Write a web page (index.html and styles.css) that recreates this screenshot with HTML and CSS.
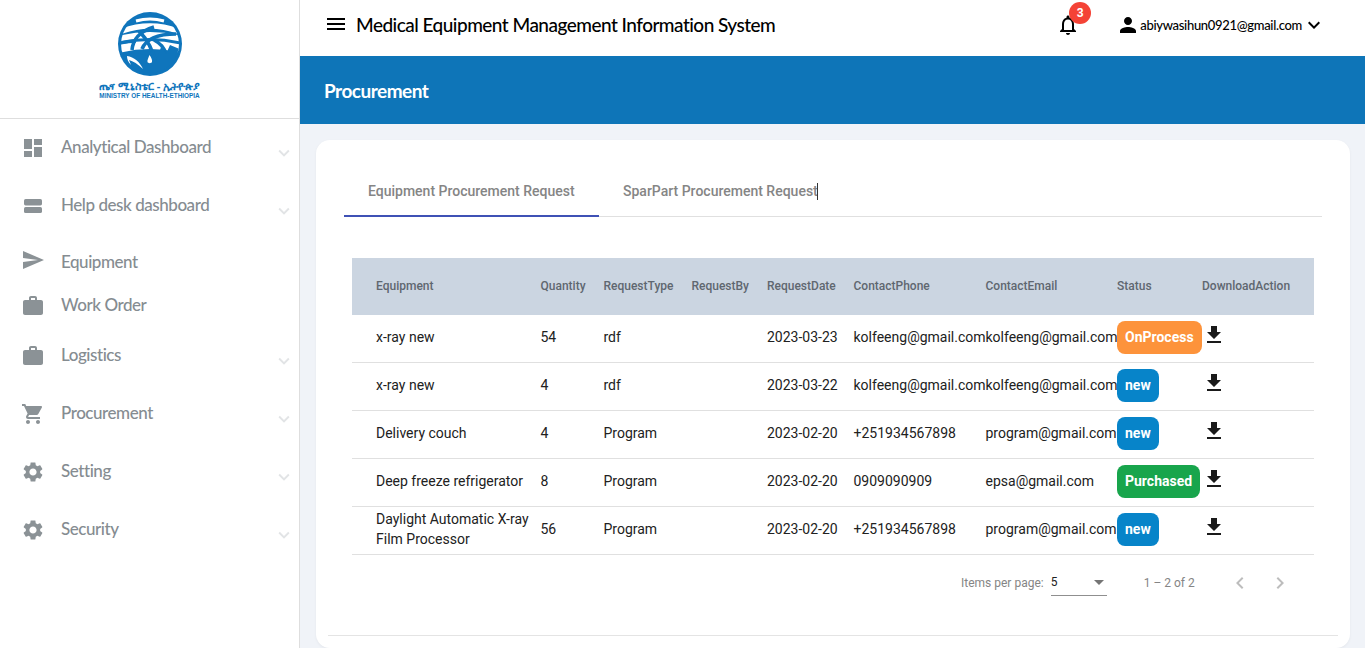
FILE: index.html
```html
<!DOCTYPE html>
<html lang="en">
<head>
    <meta charset="UTF-8">
    <meta name="viewport" content="width=device-width, initial-scale=1.0">
    <title>Procurement</title>
    <link rel="stylesheet" href="styles.css">
</head>
<body>
    <svg class="sprite" xmlns="http://www.w3.org/2000/svg">
        <symbol id="i-dashboard" viewBox="0 0 24 24"><path d="M3 13h8V3H3v10zm0 8h8v-6H3v6zm10 0h8V11h-8v10zm0-18v6h8V3h-8z"/></symbol>
        <symbol id="i-agenda" viewBox="0 0 24 24"><rect x="3" y="5" width="18" height="6.4" rx="1.6"/><rect x="3" y="13" width="18" height="6" rx="1.6"/></symbol>
        <symbol id="i-send" viewBox="0 0 24 24"><path d="M2.01 21L23 12 2.01 3 2 10l15 2-15 2z"/></symbol>
        <symbol id="i-work" viewBox="0 0 24 24"><path d="M20 6h-4V4c0-1.11-.89-2-2-2h-4c-1.11 0-2 .89-2 2v2H4c-1.11 0-1.99.89-1.99 2L2 19c0 1.11.89 2 2 2h16c1.11 0 2-.89 2-2V8c0-1.11-.89-2-2-2zm-6 0h-4V4h4v2z"/></symbol>
        <symbol id="i-cart" viewBox="0 0 24 24"><path d="M7 18c-1.1 0-1.99.9-1.99 2S5.9 22 7 22s2-.9 2-2-.9-2-2-2zM1 2v2h2l3.6 7.59-1.35 2.45c-.16.28-.25.61-.25.96 0 1.1.9 2 2 2h12v-2H7.42c-.14 0-.25-.11-.25-.25l.03-.12.9-1.63h7.45c.75 0 1.41-.41 1.75-1.03l3.58-6.49c.08-.14.12-.31.12-.48 0-.55-.45-1-1-1H5.21l-.94-2H1zm16 16c-1.1 0-1.99.9-1.99 2s.89 2 1.99 2 2-.9 2-2-.9-2-2-2z"/></symbol>
        <symbol id="i-gear" viewBox="0 0 24 24"><path d="M19.14 12.94c.04-.3.06-.61.06-.94 0-.32-.02-.64-.07-.94l2.03-1.58c.18-.14.23-.41.12-.61l-1.92-3.32c-.12-.22-.37-.29-.59-.22l-2.39.96c-.5-.38-1.03-.7-1.62-.94l-.36-2.54c-.04-.24-.24-.41-.48-.41h-3.84c-.24 0-.43.17-.47.41l-.36 2.54c-.59.24-1.13.57-1.62.94l-2.39-.96c-.22-.08-.47 0-.59.22L2.74 8.87c-.12.21-.08.47.12.61l2.03 1.58c-.05.3-.09.63-.09.94s.02.64.07.94l-2.03 1.58c-.18.14-.23.41-.12.61l1.92 3.32c.12.22.37.29.59.22l2.39-.96c.5.38 1.03.7 1.62.94l.36 2.54c.05.24.24.41.48.41h3.84c.24 0 .44-.17.47-.41l.36-2.54c.59-.24 1.13-.56 1.62-.94l2.39.96c.22.08.47 0 .59-.22l1.92-3.32c.12-.22.07-.47-.12-.61l-2.01-1.58zM12 15.6c-1.98 0-3.6-1.62-3.6-3.6s1.62-3.6 3.6-3.6 3.6 1.62 3.6 3.6-1.62 3.6-3.6 3.6z"/></symbol>
        <symbol id="i-more" viewBox="0 0 24 24"><path d="M16.59 8.59L12 13.17 7.41 8.59 6 10l6 6 6-6z"/></symbol>
        <symbol id="i-menu" viewBox="0 0 24 24"><path d="M3 18h18v-2H3v2zm0-5h18v-2H3v2zm0-7v2h18V6H3z"/></symbol>
        <symbol id="i-bell" viewBox="0 0 24 24"><path d="M12 22c1.1 0 2-.9 2-2h-4c0 1.1.9 2 2 2zm6-6v-5c0-3.07-1.63-5.64-4.5-6.32V4c0-.83-.67-1.5-1.5-1.5s-1.5.67-1.5 1.5v.68C7.64 5.36 6 7.92 6 11v5l-2 2v1h16v-1l-2-2zm-2 1H8v-6c0-2.48 1.51-4.5 4-4.5s4 2.02 4 4.5v6z"/></symbol>
        <symbol id="i-person" viewBox="0 0 24 24"><path d="M12 12c2.21 0 4-1.79 4-4s-1.79-4-4-4-4 1.79-4 4 1.79 4 4 4zm0 2c-2.67 0-8 1.34-8 4v2h16v-2c0-2.66-5.33-4-8-4z"/></symbol>
        <symbol id="i-download" viewBox="0 0 24 24"><path d="M19 9h-4V3H9v6H5l7 7 7-7zM5 18v2h14v-2H5z"/></symbol>
        <symbol id="i-left" viewBox="0 0 24 24"><path d="M15.41 7.41L14 6l-6 6 6 6 1.41-1.41L10.83 12z"/></symbol>
        <symbol id="i-right" viewBox="0 0 24 24"><path d="M10 6L8.59 7.41 13.17 12l-4.58 4.59L10 18l6-6z"/></symbol>
    </svg>

    <div class="app">
        <aside class="sidebar">
            <div class="brand">
                <svg class="brand-mark" viewBox="0 0 64 64">
                    <clipPath id="brand-clip"><circle cx="32" cy="32" r="29"/></clipPath>
                    <circle cx="32" cy="32" r="32" fill="#0f75bc"/>
                    <g clip-path="url(#brand-clip)">
                        <g fill="none" stroke="#fff">
                            <path d="M18 9Q32 5 46 9" stroke-width="3"/>
                            <path d="M4 19Q32 9 60 19" stroke-width="5.500"/>
                            <path d="M0 27Q32 19 64 27" stroke-width="6"/>
                            <path d="M0 37Q32 29 64 37" stroke-width="8"/>
                        </g>
                        <g fill="none" stroke="#0f75bc" stroke-width="3.600">
                            <path d="M14 38C15 28 20 20 36 15"/>
                            <path d="M21 19C29 27 35 38 38 52"/>
                            <path d="M24 37C28 27 38 22 58 22"/>
                            <path d="M36 28C42 31 46 35 48 42"/>
                            <path d="M2 31Q10 29 18 29"/>
                        </g>
                        <path d="M0 43L20 41 30 44 34 38 38 50 44 32 48 42 52 33 64 38V64H0z" fill="#0f75bc"/>
                        <path d="M9 44c7 1 13 6 16 13-5-5-10-8-14-9l2 5c-3-3-4-6-4-9z" fill="#fff"/>
                        <path d="M31.500 43c2 3 3 5 2.500 7-.5 1.500-4 1.500-4.500 0-.5-2 1-4 2-7z" fill="#fff"/>
                    </g>
                </svg>
                <div class="brand-am">ጤና ሚኒስቴር - ኢትዮጵያ</div>
                <div class="brand-en">MINISTRY OF HEALTH-ETHIOPIA</div>
            </div>
            <nav class="nav">
                <a class="nav-item"><svg class="nav-icon"><use href="#i-dashboard"/></svg><span>Analytical Dashboard</span><svg class="nav-arrow"><use href="#i-more"/></svg></a>
                <a class="nav-item"><svg class="nav-icon"><use href="#i-agenda"/></svg><span>Help desk dashboard</span><svg class="nav-arrow"><use href="#i-more"/></svg></a>
                <a class="nav-item nav-equipment"><svg class="nav-icon"><use href="#i-send"/></svg><span>Equipment</span></a>
                <a class="nav-item nav-order"><svg class="nav-icon"><use href="#i-work"/></svg><span>Work Order</span></a>
                <a class="nav-item"><svg class="nav-icon"><use href="#i-work"/></svg><span>Logistics</span><svg class="nav-arrow"><use href="#i-more"/></svg></a>
                <a class="nav-item"><svg class="nav-icon"><use href="#i-cart"/></svg><span>Procurement</span><svg class="nav-arrow"><use href="#i-more"/></svg></a>
                <a class="nav-item"><svg class="nav-icon"><use href="#i-gear"/></svg><span>Setting</span><svg class="nav-arrow"><use href="#i-more"/></svg></a>
                <a class="nav-item"><svg class="nav-icon"><use href="#i-gear"/></svg><span>Security</span><svg class="nav-arrow"><use href="#i-more"/></svg></a>
            </nav>
        </aside>

        <main class="main">
            <header class="topbar">
                <svg class="menu-icon"><use href="#i-menu"/></svg>
                <h1 class="app-title">Medical Equipment Management Information System</h1>
                <div class="bell">
                    <svg class="bell-icon"><use href="#i-bell"/></svg>
                    <span class="bell-count">3</span>
                </div>
                <div class="user">
                    <svg class="user-icon"><use href="#i-person"/></svg>
                    <span class="user-mail">abiywasihun0921@gmail.com</span>
                    <svg class="user-arrow"><use href="#i-more"/></svg>
                </div>
            </header>

            <div class="page-band">Procurement</div>

            <section class="card">
                <div class="tabs">
                    <div class="tab tab-active">Equipment Procurement Request</div>
                    <div class="tab">SparPart Procurement Request<i class="caret"></i></div>
                </div>

                <table class="grid">
                    <colgroup>
                        <col class="c-equipment"><col class="c-quantity"><col class="c-type"><col class="c-by"><col class="c-date"><col class="c-phone"><col class="c-email"><col class="c-status"><col class="c-action">
                    </colgroup>
                    <thead>
                        <tr>
                            <th>Equipment</th><th>Quantity</th><th>RequestType</th><th>RequestBy</th><th>RequestDate</th><th>ContactPhone</th><th>ContactEmail</th><th>Status</th><th>DownloadAction</th>
                        </tr>
                    </thead>
                    <tbody>
                        <tr>
                            <td>x-ray new</td><td>54</td><td>rdf</td><td></td><td>2023-03-23</td><td>kolfeeng@gmail.com</td><td>kolfeeng@gmail.com</td>
                            <td><span class="badge badge-process">OnProcess</span></td>
                            <td><svg class="dl"><use href="#i-download"/></svg></td>
                        </tr>
                        <tr>
                            <td>x-ray new</td><td>4</td><td>rdf</td><td></td><td>2023-03-22</td><td>kolfeeng@gmail.com</td><td>kolfeeng@gmail.com</td>
                            <td><span class="badge badge-new">new</span></td>
                            <td><svg class="dl"><use href="#i-download"/></svg></td>
                        </tr>
                        <tr>
                            <td>Delivery couch</td><td>4</td><td>Program</td><td></td><td>2023-02-20</td><td>+251934567898</td><td>program@gmail.com</td>
                            <td><span class="badge badge-new">new</span></td>
                            <td><svg class="dl"><use href="#i-download"/></svg></td>
                        </tr>
                        <tr>
                            <td>Deep freeze refrigerator</td><td>8</td><td>Program</td><td></td><td>2023-02-20</td><td>0909090909</td><td>epsa@gmail.com</td>
                            <td><span class="badge badge-done">Purchased</span></td>
                            <td><svg class="dl"><use href="#i-download"/></svg></td>
                        </tr>
                        <tr>
                            <td>Daylight Automatic X-ray Film Processor</td><td>56</td><td>Program</td><td></td><td>2023-02-20</td><td>+251934567898</td><td>program@gmail.com</td>
                            <td><span class="badge badge-new">new</span></td>
                            <td><svg class="dl"><use href="#i-download"/></svg></td>
                        </tr>
                    </tbody>
                </table>

                <div class="pager">
                    <span class="pager-label">Items per page:</span>
                    <div class="pager-select"><span>5</span><i class="pager-caret"></i></div>
                    <span class="pager-range">1 – 2 of 2</span>
                    <svg class="pager-btn"><use href="#i-left"/></svg>
                    <svg class="pager-btn"><use href="#i-right"/></svg>
                </div>

                <div class="card-rule"></div>
            </section>
        </main>
    </div>
</body>
</html>
```

FILE: styles.css
```css
* {
    box-sizing: border-box;
}
html, body {
    margin: 0;
    height: 100%;
    overflow: hidden;
}
body {
    font-family: Roboto, "Liberation Sans", sans-serif;
    background-color: #f0f3f8;
}
.sprite {
    display: none;
}
.app {
    display: flex;
    height: 100vh;
}

/* sidebar */
.sidebar {
    width: 300px;
    flex-shrink: 0;
    background-color: #fff;
    border-right: 1px solid #dedede;
}
.brand {
    height: 119px;
    padding-top: 12px;
    border-bottom: 1px solid #dedede;
    display: flex;
    flex-direction: column;
    align-items: center;
    color: #0f75bc;
}
.brand-mark {
    width: 64px;
    height: 64px;
}
.brand-am {
    margin-top: 3px;
    height: 13px;
    font-family: "Noto Sans", "DejaVu Sans", sans-serif;
    font-size: 11px;
    line-height: 13px;
    font-weight: 700;
}
.brand-en {
    font-family: "Liberation Sans", sans-serif;
    font-size: 6.4px;
    line-height: 7px;
    font-weight: 700;
}
.nav-item {
    display: flex;
    align-items: center;
    height: 58px;
    padding: 0 4px 0 21px;
    color: #858c91;
    font-family: Lato, sans-serif;
    font-size: 17px;
    font-weight: 500;
    letter-spacing: -0.45px;
}
.nav-item span {
    margin-bottom: 4px;
}
.nav-equipment {
    height: 57px;
}
.nav-equipment .nav-icon {
    margin-bottom: 8px;
}
.nav-order {
    height: 35px;
    padding-bottom: 7px;
}
.nav-icon {
    width: 24px;
    height: 24px;
    fill: #8b9296;
    margin-right: 16px;
    flex-shrink: 0;
}
.nav-arrow {
    width: 22px;
    height: 22px;
    margin-left: auto;
    margin-top: 9px;
    fill: #e2e4e6;
}

/* top bar */
.main {
    flex: 1;
    min-width: 0;
    display: flex;
    flex-direction: column;
}
.topbar {
    height: 56px;
    flex-shrink: 0;
    display: flex;
    align-items: center;
    padding: 0 39px 6px 24px;
    background-color: #fff;
}
.menu-icon {
    width: 24px;
    height: 24px;
    margin-right: 8px;
    margin-bottom: 2px;
}
.app-title {
    margin: 0 0 2px;
    font-family: Lato, sans-serif;
    font-size: 19px;
    font-weight: 500;
    letter-spacing: -0.52px;
    color: #000;
}
.bell {
    position: relative;
    width: 24px;
    height: 24px;
    margin-left: auto;
}
.bell-icon {
    width: 24px;
    height: 24px;
}
.bell-count {
    position: absolute;
    top: -11px;
    left: 13px;
    width: 22px;
    height: 22px;
    border-radius: 50%;
    background-color: #f44336;
    color: #fff;
    font-size: 12px;
    font-weight: 700;
    line-height: 22px;
    text-align: center;
}
.user {
    display: flex;
    align-items: center;
    margin-left: 36px;
}
.user-icon {
    width: 24px;
    height: 24px;
}
.user-mail {
    font-family: Lato, sans-serif;
    font-size: 13px;
    font-weight: 500;
    letter-spacing: -0.32px;
    color: #000;
}
.user-arrow {
    width: 24px;
    height: 24px;
}
.page-band {
    height: 68px;
    flex-shrink: 0;
    padding: 0 24px;
    background-color: #0e75b8;
    color: #fff;
    font-family: Lato, sans-serif;
    font-size: 19px;
    font-weight: 700;
    letter-spacing: -0.5px;
    line-height: 70px;
}

/* card */
.card {
    flex: 1;
    margin: 16px 15px 0 16px;
    padding: 29px 28px 0;
    background-color: #fff;
    border-radius: 14px;
    box-shadow: 0 1px 3px rgba(0, 0, 0, 0.05);
    overflow: hidden;
}
.tabs {
    display: flex;
    height: 48px;
    border-bottom: 1px solid #e0e0e0;
}
.tab {
    position: relative;
    height: 48px;
    padding: 0 24px;
    color: #858585;
    font-size: 14px;
    font-weight: 500;
    line-height: 45px;
    white-space: nowrap;
}
.tab-active {
    width: 255px;
    border-bottom: 2px solid #3f51b5;
}
.caret {
    display: inline-block;
    width: 1px;
    height: 17px;
    margin-left: -1px;
    vertical-align: -4px;
    background-color: #333;
}

/* table */
.grid {
    width: 962px;
    margin: 41px 0 0 8px;
    border-collapse: collapse;
    table-layout: fixed;
    font-size: 14px;
    color: #212121;
}
.c-equipment { width: 188.5px; }
.c-quantity { width: 63px; }
.c-type { width: 88px; }
.c-by { width: 75.5px; }
.c-date { width: 86.5px; }
.c-phone { width: 132px; }
.c-email { width: 131.5px; }
.c-status { width: 85px; }
.c-action { width: 112px; }
.grid th {
    height: 57px;
    padding: 0 0 1px;
    background-color: #cbd5e1;
    color: #5f6770;
    font-size: 12px;
    font-weight: 500;
    text-align: left;
}
.grid td {
    height: 48px;
    padding: 0 0 2px;
    line-height: 20px;
    border-bottom: 1px solid #e0e0e0;
    white-space: nowrap;
}
.grid th:first-child {
    padding-left: 24px;
}
.grid td:first-child {
    padding-left: 24px;
    padding-right: 8px;
    white-space: normal;
}
.grid tbody tr:first-child td {
    height: 47px;
}
.badge {
    display: inline-block;
    height: 33px;
    padding: 0 8px;
    border-radius: 8px;
    color: #fff;
    font-weight: 700;
    line-height: 33px;
    vertical-align: middle;
}
.badge-process {
    background-color: #fd933b;
}
.badge-new {
    background-color: #0784c9;
}
.badge-done {
    background-color: #18a54c;
}
.dl {
    display: block;
    width: 24px;
    height: 24px;
    margin-top: -5px;
    fill: #1a1a1a;
}

/* paginator */
.pager {
    display: flex;
    align-items: center;
    height: 56px;
    padding-left: 617px;
    font-size: 12px;
    color: #858585;
}
.pager-label {
    margin-right: 7px;
}
.pager-select {
    position: relative;
    width: 56px;
    height: 24px;
    margin-top: 2px;
    border-bottom: 1px solid #8f8f8f;
    color: #212121;
    line-height: 20px;
}
.pager-caret {
    position: absolute;
    right: 3px;
    top: 8px;
    border-left: 5px solid transparent;
    border-right: 5px solid transparent;
    border-top: 5px solid #757575;
}
.pager-range {
    margin-left: 37px;
    margin-right: 33px;
}
.pager-btn {
    width: 24px;
    height: 24px;
    margin-right: 16px;
    fill: #bdbdbd;
}
.card-rule {
    margin: 24px -16px 0;
    border-top: 1px solid #e4e4e4;
}
```
